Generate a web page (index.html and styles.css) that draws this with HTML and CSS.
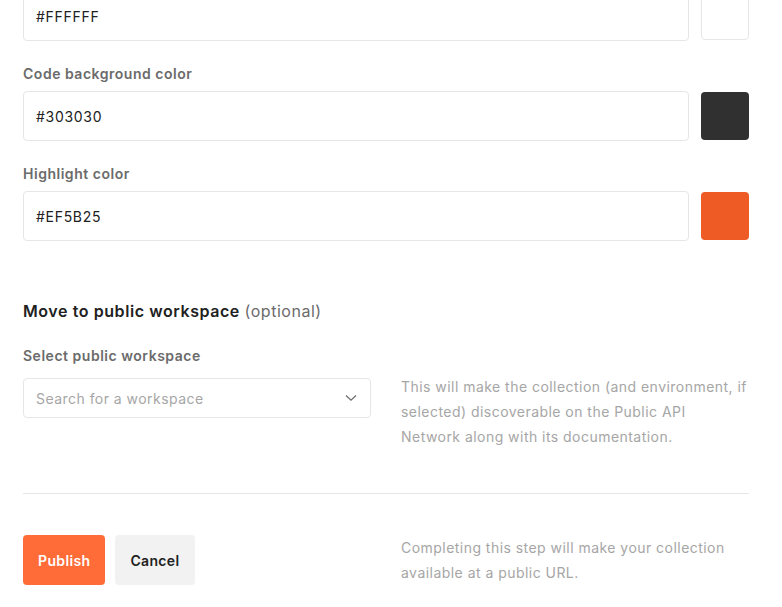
FILE: index.html
```html
<!DOCTYPE html>
<html lang="en">
<head>
<meta charset="utf-8">
<title>Publish documentation</title>
<link rel="stylesheet" href="styles.css">
</head>
<body>
<main class="page">
  <section class="colors">
    <div class="field first">
      <div class="color-row">
        <div class="text-input">#FFFFFF</div>
        <div class="swatch swatch-white"></div>
      </div>
    </div>
    <div class="field">
      <label class="label">Code background color</label>
      <div class="color-row">
        <div class="text-input">#303030</div>
        <div class="swatch swatch-dark"></div>
      </div>
    </div>
    <div class="field">
      <label class="label">Highlight color</label>
      <div class="color-row">
        <div class="text-input">#EF5B25</div>
        <div class="swatch swatch-orange"></div>
      </div>
    </div>
  </section>

  <section class="workspace">
    <h2 class="heading">Move to public workspace <span class="optional">(optional)</span></h2>
    <div class="two-col">
      <div class="col">
        <label class="label label-select">Select public workspace</label>
        <div class="select">
          <span class="placeholder">Search for a workspace</span>
          <svg class="chevron" width="12" height="8" viewBox="0 0 12 8" aria-hidden="true">
            <path d="M1 1.5 L6 6.2 L11 1.5" fill="none" stroke="#6b6b6b" stroke-width="1.2"/>
          </svg>
        </div>
      </div>
      <p class="help help-workspace">This will make the collection (and environment, if selected) discoverable on the Public API Network along with its documentation.</p>
    </div>
  </section>

  <hr class="divider">

  <section class="two-col footer">
    <div class="buttons">
      <button class="btn btn-primary">Publish</button>
      <button class="btn btn-secondary">Cancel</button>
    </div>
    <p class="help">Completing this step will make your collection available at a public URL.</p>
  </section>
</main>
</body>
</html>
```

FILE: styles.css
```css
* { box-sizing: border-box; }

html, body {
  margin: 0;
  padding: 0;
  background: #ffffff;
}

body {
  font-family: Inter, "Noto Sans", "Liberation Sans", sans-serif;
  font-size: 14px;
  color: #212121;
  letter-spacing: 0.033em;
  overflow: hidden;
}

.page {
  width: 726px;
  margin-left: 23px;
  margin-top: -9px;
}

.colors {
  display: flex;
  flex-direction: column;
  gap: 23px;
}

.label {
  display: block;
  font-size: 14px;
  line-height: 20px;
  font-weight: 600;
  letter-spacing: 0.037em;
  color: #6b6b6b;
  margin-bottom: 7px;
}

.color-row {
  display: flex;
  align-items: center;
  gap: 12px;
}

.text-input {
  flex: 1;
  height: 50px;
  border: 1px solid #e6e6e6;
  border-radius: 4px;
  padding: 0 12px;
  display: flex;
  align-items: center;
  font-size: 14px;
  letter-spacing: 0.05em;
  color: #212121;
  background: #fff;
}

.swatch {
  width: 48px;
  height: 48px;
  border-radius: 4px;
  flex: none;
}

.swatch-white { background: #ffffff; border: 1px solid #e6e6e6; }
.swatch-dark { background: #303030; }
.swatch-orange { background: #ef5b25; }

.workspace {
  margin-top: 58px;
}

.heading {
  margin: 0;
  font-size: 16px;
  line-height: 24px;
  font-weight: 600;
  letter-spacing: 0.036em;
  color: #212121;
}

.optional {
  font-weight: 400;
  letter-spacing: 0.033em;
  color: #6b6b6b;
}

.two-col {
  display: grid;
  grid-template-columns: 348px 348px;
  column-gap: 30px;
}

.workspace .two-col {
  margin-top: 23px;
}

.label-select {
  margin-bottom: 12px;
}

.select {
  height: 40px;
  border: 1px solid #e6e6e6;
  border-radius: 4px;
  padding: 0 12px;
  display: flex;
  align-items: center;
  justify-content: space-between;
}

.placeholder {
  color: #a6a6a6;
  font-size: 14px;
}

.chevron {
  margin-right: 1px;
}

.help {
  margin: 0;
  font-size: 14px;
  line-height: 25px;
  color: #a6a6a6;
}

.help-workspace {
  margin-top: 28px;
}

.divider {
  margin: 44px 0 0 0;
  border: 0;
  border-top: 1px solid #e6e6e6;
  height: 0;
}

.footer {
  margin-top: 41px;
}

.buttons {
  display: flex;
  gap: 10px;
}

.btn {
  height: 50px;
  padding: 0 15px;
  border: 0;
  border-radius: 4px;
  font-family: Inter, "Noto Sans", "Liberation Sans", sans-serif;
  font-size: 14px;
  font-weight: 600;
  letter-spacing: 0.025em;
  cursor: pointer;
}

.btn-primary {
  background: #ff6c37;
  color: #ffffff;
}

.btn-secondary {
  background: #f2f2f2;
  color: #212121;
}
```
